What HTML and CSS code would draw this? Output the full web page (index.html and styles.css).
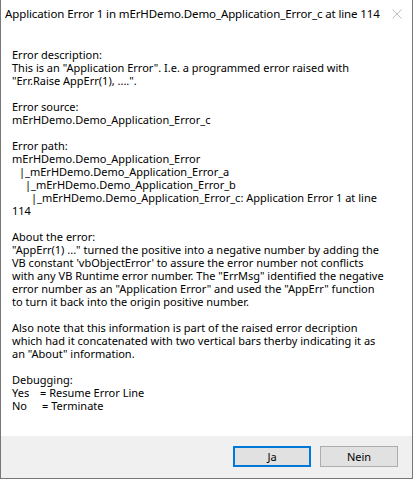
FILE: index.html
```html
<!DOCTYPE html>
<html>
<head>
<meta charset="utf-8">
<link rel="stylesheet" href="styles.css">
</head>
<body>
<div class="window">
  <div class="titlebar">
    <span class="title">Application Error 1 in mErHDemo.Demo_Application_Error_c at line 114</span>
    <svg class="close" width="10" height="10" viewBox="0 0 10 10"><path d="M0.5 0.5 L9.5 9.5 M9.5 0.5 L0.5 9.5" stroke="#bdbdbd" stroke-width="1" fill="none"/></svg>
  </div>
  <div class="content">
    <div class="msg">
      <div class="line">Error description:</div>
      <div class="line">This is an "Application Error". I.e. a programmed error raised with</div>
      <div class="line">"Err.Raise AppErr(1), ....".</div>
      <div class="blank"></div>
      <div class="line">Error source:</div>
      <div class="line">mErHDemo.Demo_Application_Error_c</div>
      <div class="blank"></div>
      <div class="line">Error path:</div>
      <div class="line">mErHDemo.Demo_Application_Error</div>
      <div class="line ind1">|_mErHDemo.Demo_Application_Error_a</div>
      <div class="line ind2">|_mErHDemo.Demo_Application_Error_b</div>
      <div class="line ind3">|_mErHDemo.Demo_Application_Error_c: Application Error 1 at line</div>
      <div class="line">114</div>
      <div class="blank"></div>
      <div class="line">About the error:</div>
      <div class="line">"AppErr(1) ..." turned the positive into a negative number by adding the</div>
      <div class="line">VB constant 'vbObjectError' to assure the error number not conflicts</div>
      <div class="line">with any VB Runtime error number. The "ErrMsg" identified the negative</div>
      <div class="line">error number as an "Application Error" and used the "AppErr" function</div>
      <div class="line">to turn it back into the origin positive number.</div>
      <div class="blank"></div>
      <div class="line">Also note that this information is part of the raised error decription</div>
      <div class="line">which had it concatenated with two vertical bars therby indicating it as</div>
      <div class="line">an "About" information.</div>
      <div class="blank"></div>
      <div class="line">Debugging:</div>
      <div class="line"><span class="key">Yes</span>= Resume Error Line</div>
      <div class="line"><span class="key key-no">No</span>= Terminate</div>
    </div>
  </div>
  <div class="footer">
    <button class="btn btn-default">Ja</button>
    <button class="btn">Nein</button>
  </div>
</div>
</body>
</html>
```

FILE: styles.css
```css
html, body {
  margin: 0;
  padding: 0;
  background: #ffffff;
}

.window {
  width: 411px;
  height: 478px;
  border-left: 1px solid #777777;
  border-right: 1px solid #777777;
  border-bottom: 1px solid #777777;
  display: flex;
  flex-direction: column;
  background: #ffffff;
  font-family: "Noto Sans", "Open Sans", sans-serif;
  color: #000000;
}

.titlebar {
  height: 30px;
  display: flex;
  align-items: center;
  justify-content: space-between;
  padding: 0 10px 0 4px;
  flex: none;
}

.title {
  font-size: 11.5px;
  letter-spacing: -0.12px;
  line-height: 16px;
  white-space: nowrap;
  margin-top: -3px;
}

.close {
  display: block;
  flex: none;
  margin-top: -3px;
}

.content {
  flex: 1;
  padding: 18px 0 0 11px;
}

.msg {
  font-size: 11px;
  line-height: 13px;
  white-space: nowrap;
}

.line {
  height: 13px;
}

.blank {
  height: 13px;
}

.ind1 { padding-left: 7px; }
.ind2 { padding-left: 13px; }
.ind3 { padding-left: 19px; }

.key {
  display: inline-block;
  width: 28px;
}

.key-no {
  width: 30px;
}

.footer {
  flex: none;
  height: 42px;
  background: #f0f0f0;
  display: flex;
  justify-content: flex-end;
  align-items: flex-start;
  gap: 9px;
  padding: 10px 14px 0 0;
  box-sizing: border-box;
}

.btn {
  width: 78px;
  height: 21px;
  box-sizing: border-box;
  background: #e1e1e1;
  border: 1px solid #adadad;
  font-family: "Noto Sans", "Open Sans", sans-serif;
  font-size: 11px;
  color: #000000;
  padding: 0;
  margin: 0;
  line-height: 18px;
}

.btn-default {
  border: 2px solid #0078d7;
}
```
